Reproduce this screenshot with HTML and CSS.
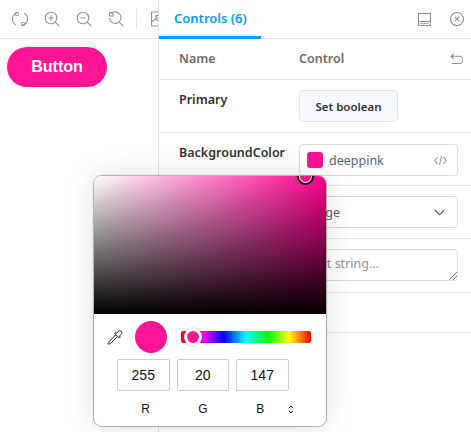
FILE: index.html
```html
<!DOCTYPE html>
<html lang="en">
<head>
  <meta charset="UTF-8" />
  <title>Controls</title>
  <link rel="stylesheet" href="styles.css">
</head>
<body>
  <div class="app">
    <div class="preview">
      <div class="toolbar">
        <svg class="tool" width="16" height="16" viewBox="0 0 16 16"><path d="M6 1.800A6.500 6.500 0 0 0 4 14M10 14.200A6.500 6.500 0 0 0 12 2"/><path d="M3.500 1.500h3v3h-3zM9.500 11.500h3v3h-3z" class="thin"/></svg>
        <svg class="tool" width="16" height="16" viewBox="0 0 16 16"><circle cx="7" cy="7" r="5.800"/><path d="M11.200 11.200 15 15M4.500 7h5M7 4.500v5"/></svg>
        <svg class="tool" width="16" height="16" viewBox="0 0 16 16"><circle cx="7" cy="7" r="5.800"/><path d="M11.200 11.200 15 15M4.500 7h5"/></svg>
        <svg class="tool" width="16" height="16" viewBox="0 0 16 16"><path d="M3 2.600A5.800 5.800 0 1 1 1.400 7M11.200 11.200 15 15M1.500 1.500h3.500v3.500H1.500z"/></svg>
        <span class="tool-sep"></span>
        <svg class="tool" width="16" height="16" viewBox="0 0 16 16"><path d="M.5 1h13v14H.5zM.5 11l4-3 5 3.500M5 4.500h3v2.500H5z"/></svg>
      </div>
      <div class="stage">
        <button class="pink-btn">Button</button>
      </div>
    </div>

    <div class="panel">
      <div class="tabs">
        <div class="tab">Controls (6)</div>
        <div class="tab-icons">
          <svg class="tool" width="13" height="13" viewBox="0 0 13 13"><path d="M.5.500h12v12H.5zM.5 8.500h12"/><path d="M2.500 10.500h2M5.500 10.500h2M8.500 10.500h2"/></svg>
          <svg class="tool" width="14" height="14" viewBox="0 0 14 14"><circle cx="7" cy="7" r="6.500"/><path d="m4.800 4.800 4.400 4.400M9.200 4.800 4.800 9.200"/></svg>
        </div>
      </div>

      <div class="row row-head">
        <div class="cell-name head">Name</div>
        <div class="cell-control head">Control</div>
        <svg class="tool undo" width="13" height="12" viewBox="0 0 13 12"><path d="M4 .800 1 3.300l3 2.400M1 3.300h8.500a3 3 0 0 1 0 7.200H2"/></svg>
      </div>

      <div class="row row-primary">
        <div class="cell-name">Primary</div>
        <div class="cell-control"><button class="set-btn">Set boolean</button></div>
      </div>

      <div class="row row-color">
        <div class="cell-name">BackgroundColor</div>
        <div class="cell-control">
          <div class="field">
            <span class="swatch"></span>
            <span class="field-text">deeppink</span>
            <svg class="tool code" width="13" height="11" viewBox="0 0 13 11"><path d="M3.500 2 .8 5.500 3.500 9M9.500 2l2.700 3.500L9.500 9M7.500 1l-2 9"/></svg>
          </div>
        </div>
      </div>

      <div class="row row-size">
        <div class="cell-name">Size</div>
        <div class="cell-control">
          <div class="field field-select">
            <span class="field-text">large</span>
            <svg class="tool chevron" width="11" height="7" viewBox="0 0 11 7"><path d="m.7 1 4.800 4.800L10.300 1"/></svg>
          </div>
        </div>
      </div>

      <div class="row row-label">
        <div class="cell-name">Label</div>
        <div class="cell-control">
          <div class="field area">
            <span class="placeholder">Edit string...</span>
            <svg class="grip" width="8" height="8" viewBox="0 0 8 8"><path d="M0 8 8 0M4 8l4-4"/></svg>
          </div>
        </div>
      </div>

      <div class="row row-last"></div>
    </div>
  </div>

  <div class="picker">
    <div class="sat">
      <span class="sat-thumb"></span>
    </div>
    <div class="picker-body">
      <div class="picker-top">
        <svg class="dropper" width="17" height="17" viewBox="0 0 17 17"><path d="M9.300 5.300 2.400 12.200c-.5.500-.6 1-.7 1.500l-.7 1 .6.600 1-.7c.5-.1 1-.2 1.500-.7l6.900-6.900z"/><path d="m7.900 4.700 4.400 4.400 1-1-.9-1.200 1.800-1.600c.9-.9.900-2.200.1-3s-2.100-.8-3 .1l-1.600 1.800-1.200-.9z"/></svg>
        <span class="current"></span>
        <div class="hue"><span class="hue-thumb"></span></div>
      </div>
      <div class="rgb-inputs">
        <div class="rgb-box">255</div>
        <div class="rgb-box">20</div>
        <div class="rgb-box">147</div>
      </div>
      <div class="rgb-labels">
        <span class="rgb-label">R</span>
        <span class="rgb-label">G</span>
        <span class="rgb-label">B</span>
        <svg class="updown" width="6" height="9" viewBox="0 0 6 9"><path d="M.8 3.200 3 1l2.200 2.200M.8 5.800 3 8l2.200-2.200"/></svg>
      </div>
    </div>
  </div>
</body>
</html>
```

FILE: styles.css
```css
* {
  box-sizing: border-box;
}
body {
  margin: 0;
  height: 432px;
  overflow: hidden;
  background-color: #fff;
  font-family: 'Noto Sans', sans-serif;
  font-size: 12.500px;
  color: #333;
}
.app {
  display: flex;
  height: 432px;
}
.preview {
  width: 159px;
  flex: none;
  overflow: hidden;
}
.toolbar {
  height: 39px;
  display: flex;
  align-items: center;
  gap: 16px;
  padding: 0 0 0 12px;
  border-bottom: 1px solid #e4e6e8;
}
.tool {
  flex: none;
  fill: none;
  stroke: #8a929a;
  stroke-width: 1.100;
}
.thin {
  stroke-width: .8;
}
.tool-sep {
  flex: none;
  width: 1px;
  height: 20px;
  background-color: #e4e6e8;
  margin: 0 -2px 0 -4px;
}
.stage {
  padding: 8px 7px;
}
.pink-btn {
  display: block;
  width: 100px;
  height: 40px;
  border: none;
  border-radius: 20px;
  background-color: #ff1493;
  color: #fff;
  font-family: 'Liberation Sans', sans-serif;
  font-size: 16px;
  font-weight: 700;
}
.panel {
  flex: 1;
  border-left: 1px solid #dde3ea;
  margin-left: -1px;
  min-width: 0;
}
.tabs {
  height: 39px;
  display: flex;
  justify-content: space-between;
  border-bottom: 1px solid #e4e6e8;
}
.tab {
  width: 102px;
  height: 39px;
  padding: 9px 0 0 15px;
  border-bottom: 3px solid #029cfd;
  color: #029cfd;
  font-weight: 600;
  font-size: 13px;
  line-height: 18px;
}
.tab-icons {
  display: flex;
  align-items: center;
  gap: 19px;
  padding: 0 7px 0 0;
}
.row {
  display: flex;
  align-items: flex-start;
  border-bottom: 1px solid #e4e6e8;
  position: relative;
}
.row-head {
  height: 41px;
  padding-top: 11px;
}
.row-primary {
  height: 53px;
  padding-top: 10px;
}
.row-primary .cell-name {
  padding-top: 1px;
}
.row-color {
  height: 53px;
  padding-top: 11px;
}
.row-size {
  height: 53px;
  padding-top: 10px;
}
.row-label {
  height: 54px;
  padding-top: 10px;
}
.row-last {
  height: 40px;
}
.cell-name {
  width: 140px;
  padding-left: 20px;
  font-weight: 600;
  line-height: 18px;
  color: #333;
  flex: none;
}
.cell-control {
  width: 159px;
  flex: none;
}
.head {
  color: #6f6a66;
  font-weight: 600;
  line-height: 18px;
}
.undo {
  position: absolute;
  top: 14px;
  right: 8px;
}
.set-btn {
  display: block;
  height: 32px;
  width: 99px;
  padding: 0;
  border: 1px solid #dfe8f0;
  border-radius: 4px;
  background-color: #f5fafe;
  color: #333;
  font-family: 'Noto Sans', sans-serif;
  font-size: 11.500px;
  font-weight: 600;
}
.field {
  height: 32px;
  display: flex;
  align-items: center;
  gap: 6px;
  padding: 0 7px;
  border: 1px solid #d5dde5;
  border-radius: 4px;
  background-color: #fff;
  position: relative;
}
.swatch {
  flex: none;
  width: 16px;
  height: 16px;
  border-radius: 3px;
  background-color: #ff1493;
}
.field-text {
  flex: 1;
  color: #5c6670;
}
.code {
  margin-right: 3px;
}
.field-select {
  padding-left: 10px;
}
.chevron {
  margin-right: 5px;
  stroke: #555;
}
.area {
  align-items: flex-start;
  padding-top: 5px;
  padding-left: 9px;
}
.placeholder {
  color: #8b949c;
}
.grip {
  position: absolute;
  right: 0;
  bottom: 0;
  fill: none;
  stroke: #555;
  stroke-width: .8;
}

.picker {
  position: absolute;
  left: 94px;
  top: 176px;
  width: 232px;
  height: 250px;
  border-radius: 8px;
  background-color: #fff;
  box-shadow: 0 0 1px 1px rgba(0, 0, 0, .28), 0 0 30px rgba(0, 0, 0, .13);
  font-family: 'Liberation Sans', sans-serif;
  color: #111;
}
.sat {
  height: 138px;
  border-radius: 8px 8px 0 0;
  background:
    linear-gradient(to top, #000, rgba(0, 0, 0, 0)),
    linear-gradient(to right, #fff, #ff0090);
  position: relative;
}
.sat-thumb {
  position: absolute;
  left: 204px;
  top: -7px;
  width: 15px;
  height: 15px;
  border-radius: 50%;
  border: 2px solid #fff;
  outline: 2px solid #000;
  outline-offset: -1px;
  background-color: #ff1493;
  clip-path: inset(7px -3px -3px -3px);
}
.picker-body {
  padding: 7px 0 0 13px;
}
.picker-top {
  display: flex;
  align-items: center;
  height: 32px;
}
.dropper {
  flex: none;
  fill: #fff;
  stroke: #222;
  stroke-width: 1;
}
.current {
  flex: none;
  width: 32px;
  height: 32px;
  border-radius: 50%;
  background-color: #ff1493;
  margin-left: 11px;
}
.hue {
  flex: none;
  width: 130px;
  height: 12px;
  margin-left: 14px;
  border-radius: 2px;
  background: linear-gradient(to right, #f00 0%, #f0f 17%, #00f 33%, #0ff 50%, #0f0 67%, #ff0 83%, #f00 100%);
  position: relative;
}
.hue-thumb {
  position: absolute;
  left: 3px;
  top: -3px;
  width: 18px;
  height: 18px;
  border-radius: 50%;
  border: 3px solid #fff;
  background-color: #ff1493;
  box-shadow: 0 0 2px rgba(0, 0, 0, .3);
}
.rgb-inputs {
  display: flex;
  gap: 7px;
  margin-top: 6px;
  padding-left: 10px;
}
.rgb-box {
  width: 52.500px;
  height: 32px;
  border: 1px solid #ccc;
  border-radius: 2px;
  text-align: center;
  font-size: 14px;
  line-height: 30px;
}
.rgb-labels {
  display: flex;
  align-items: center;
  margin-top: 11px;
  padding-left: 10px;
  font-size: 12px;
  height: 14px;
}
.rgb-label {
  width: 57.300px;
  text-align: center;
}
.updown {
  flex: none;
  margin-left: -1px;
  fill: none;
  stroke: #222;
  stroke-width: 1;
}
```
